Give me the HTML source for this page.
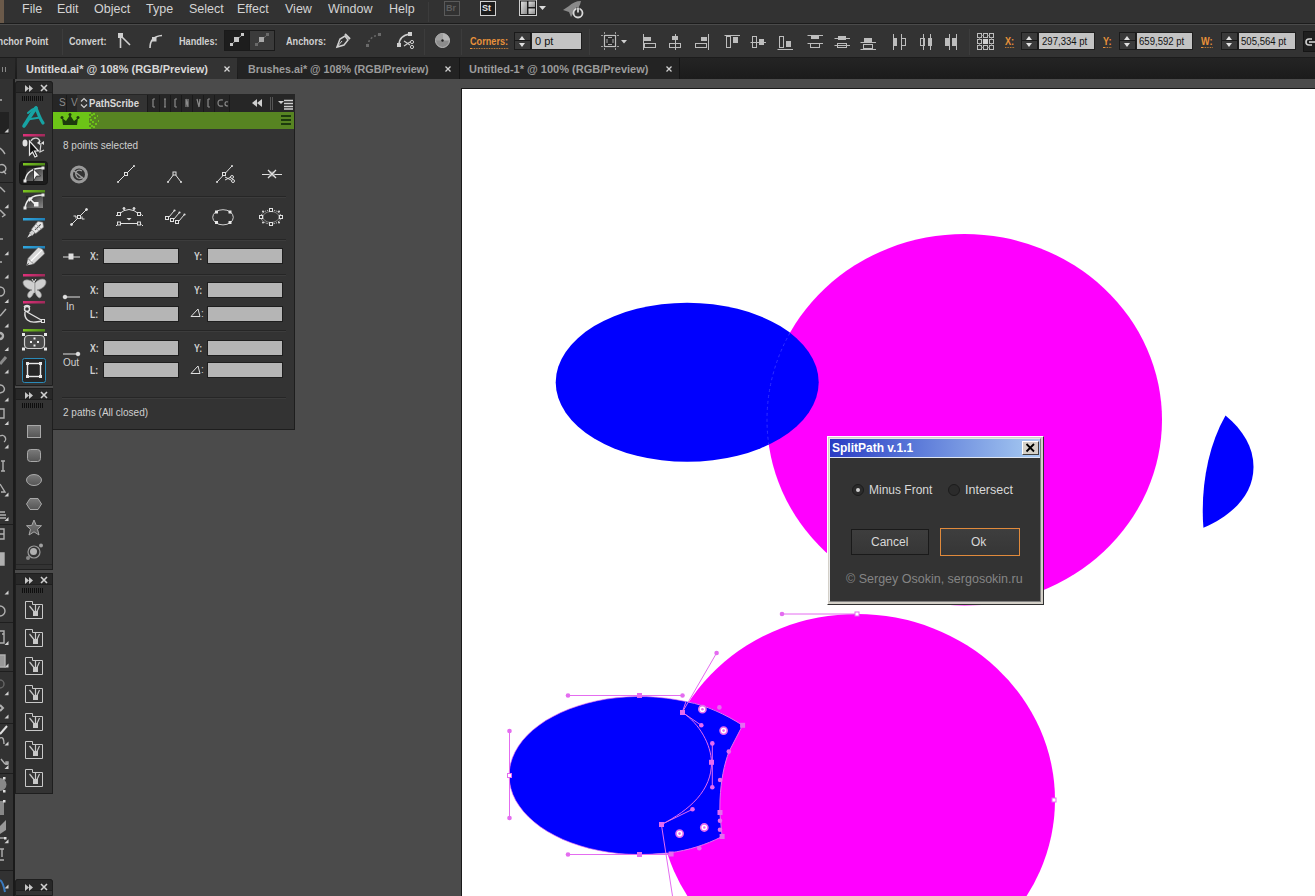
<!DOCTYPE html>
<html><head><meta charset="utf-8">
<style>
*{margin:0;padding:0;box-sizing:border-box}
html,body{width:1315px;height:896px;overflow:hidden;background:#4b4b4b;font-family:"Liberation Sans",sans-serif;position:relative}
.a{position:absolute}
.t{position:absolute;white-space:nowrap;line-height:1}
#menubar{left:0;top:0;width:1315px;height:24px;background:#323232;border-bottom:1px solid #1c1c1c}
#menubar .t{top:3px;font-size:12.5px;color:#d4d4d4}
#ctrl{left:0;top:25px;width:1315px;height:33px;background:#333333;border-bottom:1px solid #1c1c1c}
.lbl{font-size:11px;font-weight:bold;color:#d0d0d0;transform:scaleX(0.83);transform-origin:0 0}
.sep{position:absolute;width:1px;background:#262626;border-right:1px solid #3c3c3c}
#tabs{left:0;top:58px;width:1315px;height:21px;background:linear-gradient(#242424,#1b1b1b)}
.tab{position:absolute;top:0;height:21px}
.tab .t{font-size:11px;font-weight:bold;top:6px}
#artboard{left:461px;top:88px;width:854px;height:808px;background:#fff;border-left:1px solid #1a1a1a;border-top:1px solid #1a1a1a}
.inp{position:absolute;background:#c3c3c3;border:1px solid #1e1e1e}
.spin{position:absolute;background:#3a3a3a;border:1px solid #1a1a1a}
.spin:before{content:"";position:absolute;left:4px;top:3px;border-left:3.5px solid transparent;border-right:3.5px solid transparent;border-bottom:4px solid #e0e0e0}
.spin:after{content:"";position:absolute;left:4px;top:10px;border-left:3.5px solid transparent;border-right:3.5px solid transparent;border-top:4px solid #e0e0e0}
.spin i{position:absolute;left:0;right:0;top:7px;height:1px;background:#1a1a1a}
.orange{color:#e8913a;font-size:11px;font-weight:bold;transform:scaleX(0.83);transform-origin:0 0}
</style></head>
<body>
<!-- MENU BAR -->
<div id="menubar" class="a">
  <div class="a" style="left:0;top:0;width:4px;height:23px;background:#6b5a4a"></div>
  <div class="t" style="left:22px">File</div>
  <div class="t" style="left:57px">Edit</div>
  <div class="t" style="left:94px">Object</div>
  <div class="t" style="left:146px">Type</div>
  <div class="t" style="left:189px">Select</div>
  <div class="t" style="left:237px">Effect</div>
  <div class="t" style="left:285px">View</div>
  <div class="t" style="left:328px">Window</div>
  <div class="t" style="left:389px">Help</div>
  <div class="sep" style="left:428px;top:2px;height:20px"></div>
  <div class="a" style="left:444px;top:1px;width:16px;height:15px;border:1px solid #5a5a5a"></div>
  <div class="t" style="left:446px;top:4px;font-size:9px;font-weight:bold;color:#5e5e5e">Br</div>
  <div class="a" style="left:480px;top:1px;width:16px;height:15px;border:1px solid #d0d0d0;background:#1c1c1c"></div>
  <div class="t" style="left:482px;top:4px;font-size:9px;font-weight:bold;color:#e0e0e0">St</div>
  <svg class="a" style="left:519px;top:0px" width="28" height="17" viewBox="0 0 28 17"><defs><linearGradient id="wg" x1="0" y1="0" x2="1" y2="1"><stop offset="0" stop-color="#e0e0e0"/><stop offset="1" stop-color="#8a8a8a"/></linearGradient></defs><rect x="0.5" y="0" width="17" height="15.5" fill="#1c1c1c" stroke="#cfcfcf"/><rect x="2" y="1.5" width="6" height="12.5" fill="url(#wg)"/><rect x="9.5" y="1.5" width="6.5" height="5.5" fill="url(#wg)"/><rect x="9.5" y="8.5" width="6.5" height="5.5" fill="url(#wg)"/><path d="M20 6 L27 6 L23.5 10 Z" fill="#dcdcdc"/></svg>
  <svg class="a" style="left:561px;top:0px" width="24" height="20" viewBox="0 0 24 20"><path d="M2 10 L8 6 C11 3 15 1 20 1 C19 6 17 9 13 12 L10 17 L8 12 Z" fill="#8a8a8a"/><circle cx="17" cy="13" r="4.5" fill="#333" stroke="#d8d8d8" stroke-width="1.8"/><path d="M17 7 V13" stroke="#333" stroke-width="3"/><path d="M17 7.5 V12.5" stroke="#d8d8d8" stroke-width="1.8"/></svg>
</div>
<!-- CONTROL BAR -->
<div id="ctrl" class="a">
  <div class="t lbl" style="left:-9px;top:11px">Anchor Point</div>
  <div class="sep" style="left:62px;top:4px;height:26px"></div>
  <div class="t lbl" style="left:69px;top:11px">Convert:</div>
  <svg class="a" style="left:116px;top:6px" width="18" height="20" viewBox="0 0 18 20"><rect x="2" y="2" width="5" height="5" fill="#cfcfcf"/><path d="M4.5 7 V17 M5 5 L14 14" stroke="#cfcfcf" stroke-width="1.6" fill="none"/></svg>
  <svg class="a" style="left:146px;top:6px" width="20" height="20" viewBox="0 0 20 20"><path d="M4 17 C4 9 8 5 16 4.5" stroke="#cfcfcf" stroke-width="1.6" fill="none"/><rect x="6" y="6" width="4.5" height="4.5" fill="#cfcfcf"/></svg>
  <div class="t lbl" style="left:179px;top:11px">Handles:</div>
  <div class="a" style="left:224px;top:5px;width:26px;height:21px;background:#1d1d1d;border:1px solid #1a1a1a"></div>
  <div class="a" style="left:249px;top:5px;width:26px;height:21px;background:#3b3b3b;border:1px solid #1a1a1a"></div>
  <svg class="a" style="left:228px;top:7px" width="18" height="16" viewBox="0 0 18 16"><path d="M4 12 L14 3" stroke="#9a9a9a" stroke-width="1"/><rect x="6" y="5" width="5" height="5" fill="#c8c8c8"/><rect x="2" y="11" width="3" height="3" fill="#c8c8c8"/><rect x="13" y="1" width="3" height="3" fill="#c8c8c8"/></svg>
  <svg class="a" style="left:253px;top:7px" width="18" height="16" viewBox="0 0 18 16"><path d="M4 12 L14 3" stroke="#6a6a6a" stroke-width="1"/><rect x="6" y="5" width="5" height="5" fill="#a8a8a8"/><rect x="2" y="11" width="3" height="3" fill="#6a6a6a"/><rect x="13" y="1" width="3" height="3" fill="#6a6a6a"/></svg>
  <div class="t lbl" style="left:286px;top:11px">Anchors:</div>
  <svg class="a" style="left:333px;top:5px" width="20" height="20" viewBox="0 0 20 20"><path d="M4 17 L7 9 L12 6 L15 10 L11 15 Z" fill="none" stroke="#cfcfcf" stroke-width="1.5"/><path d="M12 4 L17 9" stroke="#cfcfcf" stroke-width="2"/><path d="M4 17 L9 11" stroke="#cfcfcf" stroke-width="1"/></svg>
  <svg class="a" style="left:365px;top:6px" width="18" height="18" viewBox="0 0 18 18"><path d="M3 15 C3 9 7 5 14 4" stroke="#6a6a6a" stroke-width="1.5" stroke-dasharray="2 2" fill="none"/><rect x="1" y="13" width="3" height="3" fill="#6a6a6a"/><rect x="13" y="2" width="3" height="3" fill="#6a6a6a"/></svg>
  <svg class="a" style="left:396px;top:5px" width="20" height="20" viewBox="0 0 20 20"><path d="M3 15 C3 9 7 5 14 4" stroke="#cfcfcf" stroke-width="1.5" fill="none"/><rect x="1" y="13" width="4" height="4" fill="#cfcfcf"/><rect x="12" y="2" width="4" height="4" fill="#cfcfcf"/><circle cx="16" cy="12" r="1.6" fill="none" stroke="#cfcfcf"/><circle cx="16" cy="17" r="1.6" fill="none" stroke="#cfcfcf"/><path d="M8 11 L14 15 M8 16 L14 12" stroke="#cfcfcf" stroke-width="1.2"/></svg>
  <div class="sep" style="left:424px;top:4px;height:26px"></div>
  <svg class="a" style="left:434px;top:7px" width="17" height="17" viewBox="0 0 17 17"><circle cx="8.5" cy="8.5" r="7" fill="#8c8c8c" stroke="#bdbdbd" stroke-width="1"/><path d="M8.5 8.5 L8.5 1.5 A7 7 0 0 1 15.5 8.5 Z" fill="#b5b5b5"/><path d="M8.5 8.5 L1.5 8.5 A7 7 0 0 1 8.5 1.5 Z" fill="#a0a0a0"/><circle cx="8.5" cy="8.5" r="1.2" fill="#222"/></svg>
  <div class="sep" style="left:461px;top:4px;height:26px"></div>
  <div class="t orange" style="left:470px;top:11px;border-bottom:1px dotted #e8913a;padding-bottom:1px">Corners:</div>
  <div class="spin" style="left:514px;top:7px;width:17px;height:18px"><i></i></div>
  <div class="inp" style="left:531px;top:7px;width:51px;height:18px"></div>
  <div class="t" style="left:535px;top:11px;font-size:11px;color:#111">0 pt</div>
  <div class="sep" style="left:589px;top:4px;height:26px"></div>
  <svg class="a" style="left:600px;top:7px" width="28" height="20" viewBox="0 0 28 20"><rect x="4.5" y="3.5" width="11" height="11" fill="#2a2a2a" stroke="#c0c0c0" stroke-width="1.2"/><path d="M1 3.5 H3 M17 3.5 H19 M1 14.5 H3 M17 14.5 H19 M4.5 0 V2 M15.5 0 V2 M4.5 16 V18 M15.5 16 V18" stroke="#9a9a9a"/><path d="M7 7 V11 M13 7 V11 M8 5.5 H12 M8 12.5 H12" stroke="#aaa"/><path d="M21 8 L27 8 L24 11.5 Z" fill="#d0d0d0"/></svg>
  <div class="sep" style="left:632px;top:4px;height:26px;display:none"></div>
  <svg class="a" style="left:641px;top:8px" width="16" height="18" viewBox="0 0 16 18"><path d="M2.5 1 V17" stroke="#bdbdbd"/><rect x="3" y="4" width="7" height="4" fill="#bdbdbd"/><rect x="3.5" y="10.5" width="11" height="4" fill="none" stroke="#bdbdbd"/></svg>
  <svg class="a" style="left:667px;top:8px" width="16" height="18" viewBox="0 0 16 18"><path d="M8.5 1 V17" stroke="#bdbdbd"/><rect x="5" y="3" width="6" height="4" fill="#bdbdbd"/><rect x="2.5" y="10.5" width="11" height="4" fill="none" stroke="#bdbdbd"/></svg>
  <svg class="a" style="left:694px;top:8px" width="16" height="18" viewBox="0 0 16 18"><path d="M14.5 1 V17" stroke="#bdbdbd"/><rect x="7" y="4" width="6" height="4" fill="#bdbdbd"/><rect x="1.5" y="10.5" width="11" height="4" fill="none" stroke="#bdbdbd"/></svg>
  <svg class="a" style="left:724px;top:8px" width="16" height="18" viewBox="0 0 16 18"><path d="M0.5 2.5 H16" stroke="#bdbdbd"/><rect x="2.5" y="3.5" width="4" height="11" fill="none" stroke="#bdbdbd"/><rect x="9" y="4" width="5" height="6" fill="#bdbdbd"/></svg>
  <svg class="a" style="left:750px;top:8px" width="16" height="18" viewBox="0 0 16 18"><path d="M0.5 9.5 H16" stroke="#bdbdbd"/><rect x="2.5" y="3.5" width="4" height="11" fill="none" stroke="#bdbdbd"/><rect x="9" y="6" width="5" height="6" fill="#bdbdbd"/></svg>
  <svg class="a" style="left:777px;top:8px" width="16" height="18" viewBox="0 0 16 18"><path d="M0.5 16.5 H16" stroke="#bdbdbd"/><rect x="2.5" y="3.5" width="4" height="11" fill="none" stroke="#bdbdbd"/><rect x="9" y="8" width="5" height="6" fill="#bdbdbd"/></svg>
  <svg class="a" style="left:807px;top:8px" width="16" height="18" viewBox="0 0 16 18"><path d="M0.5 2.5 H16 M0.5 10.5 H16" stroke="#bdbdbd"/><rect x="4" y="2" width="8" height="4" fill="#bdbdbd"/><rect x="3.5" y="10.5" width="9" height="4" fill="none" stroke="#bdbdbd"/></svg>
  <svg class="a" style="left:834px;top:8px" width="16" height="18" viewBox="0 0 16 18"><path d="M0.5 5.5 H16 M0.5 12.5 H16" stroke="#bdbdbd"/><rect x="4" y="3" width="8" height="4" fill="#bdbdbd"/><rect x="3.5" y="10.5" width="9" height="4" fill="none" stroke="#bdbdbd"/></svg>
  <svg class="a" style="left:860px;top:8px" width="16" height="18" viewBox="0 0 16 18"><path d="M0.5 9.5 H16 M0.5 16.5 H16" stroke="#bdbdbd"/><rect x="4" y="5" width="8" height="4" fill="#bdbdbd"/><rect x="3.5" y="11.5" width="9" height="4" fill="none" stroke="#bdbdbd"/></svg>
  <svg class="a" style="left:891px;top:8px" width="16" height="18" viewBox="0 0 16 18"><path d="M2.5 1 V17 M10.5 1 V17" stroke="#bdbdbd"/><rect x="2" y="5" width="4" height="8" fill="#bdbdbd"/><rect x="10.5" y="5.5" width="4" height="7" fill="none" stroke="#bdbdbd"/></svg>
  <svg class="a" style="left:918px;top:8px" width="16" height="18" viewBox="0 0 16 18"><path d="M5.5 1 V17 M12.5 1 V17" stroke="#bdbdbd"/><rect x="2.5" y="5.5" width="4" height="7" fill="none" stroke="#bdbdbd"/><rect x="10" y="5" width="4" height="8" fill="#bdbdbd"/></svg>
  <svg class="a" style="left:942px;top:8px" width="16" height="18" viewBox="0 0 16 18"><path d="M7.5 1 V17 M14.5 1 V17" stroke="#bdbdbd"/><rect x="3" y="5" width="4" height="8" fill="#bdbdbd"/><rect x="10" y="5" width="4" height="8" fill="#bdbdbd"/></svg>
  <div class="sep" style="left:969px;top:4px;height:26px"></div>
  <svg class="a" style="left:976px;top:6px" width="20" height="22" viewBox="0 0 20 22"><g fill="none" stroke="#bdbdbd"><rect x="1.5" y="2.5" width="4" height="4"/><rect x="7.5" y="2.5" width="4" height="4"/><rect x="13.5" y="2.5" width="4" height="4"/><rect x="1.5" y="8.5" width="4" height="4"/><rect x="13.5" y="8.5" width="4" height="4"/><rect x="1.5" y="14.5" width="4" height="4"/><rect x="7.5" y="14.5" width="4" height="4"/><rect x="13.5" y="14.5" width="4" height="4"/></g><rect x="7" y="8" width="5" height="5" fill="#d0d0d0"/><path d="M5.5 4.5 H7.5 M11.5 4.5 H13.5 M5.5 16.5 H7.5 M11.5 16.5 H13.5 M3.5 6.5 V8.5 M3.5 12.5 V14.5 M15.5 6.5 V8.5 M15.5 12.5 V14.5" stroke="#8a8a8a"/></svg>
  <div class="t orange" style="left:1005px;top:11px;border-bottom:1px dotted #e8913a">X:</div>
  <div class="spin" style="left:1021px;top:7px;width:17px;height:18px"><i></i></div>
  <div class="inp" style="left:1038px;top:7px;width:57px;height:18px"></div>
  <div class="t" style="left:1042px;top:11px;font-size:11px;color:#111;transform:scaleX(0.87);transform-origin:0 0">297,334 pt</div>
  <div class="t orange" style="left:1103px;top:11px;border-bottom:1px dotted #e8913a">Y:</div>
  <div class="spin" style="left:1119px;top:7px;width:17px;height:18px"><i></i></div>
  <div class="inp" style="left:1136px;top:7px;width:57px;height:18px"></div>
  <div class="t" style="left:1139px;top:11px;font-size:11px;color:#111;transform:scaleX(0.87);transform-origin:0 0">659,592 pt</div>
  <div class="t orange" style="left:1201px;top:11px;border-bottom:1px dotted #e8913a">W:</div>
  <div class="spin" style="left:1221px;top:7px;width:17px;height:18px"><i></i></div>
  <div class="inp" style="left:1238px;top:7px;width:58px;height:18px"></div>
  <div class="t" style="left:1241px;top:11px;font-size:11px;color:#111;transform:scaleX(0.87);transform-origin:0 0">505,564 pt</div>
  <div class="a" style="left:1303px;top:6px;width:14px;height:21px;background:#1f1f1f;border:1px solid #151515"></div>
  <svg class="a" style="left:1305px;top:11px" width="10" height="12" viewBox="0 0 10 12"><path d="M7 3 H4 A3 3 0 0 0 4 9 H7" stroke="#cfcfcf" stroke-width="1.6" fill="none"/><path d="M4 6 H10" stroke="#cfcfcf" stroke-width="1.6"/></svg>
</div>
<!-- TABS -->
<div id="tabs" class="a">
  <div class="a" style="left:0;top:0;width:15px;height:21px;background:#2b2b2b"></div><div class="a" style="left:2px;top:9px;width:1px;height:5px;background:#888"></div><div class="a" style="left:5px;top:9px;width:1px;height:5px;background:#888"></div>
  <div class="tab" style="left:17px;width:220px;background:#333333"><div class="t" style="left:9px;color:#d8d8d8">Untitled.ai* @ 108% (RGB/Preview)</div><svg class="a" style="left:206px;top:7px" width="8" height="8" viewBox="0 0 8 8"><path d="M1.5 1.5 L6.5 6.5 M6.5 1.5 L1.5 6.5" stroke="#d8d8d8" stroke-width="1.3"/></svg></div>
  <div class="tab" style="left:238px;width:222px;background:#232323;border-right:1px solid #151515"><div class="t" style="left:10px;color:#9c9c9c;transform:scaleX(0.976);transform-origin:0 0">Brushes.ai* @ 108% (RGB/Preview)</div><svg class="a" style="left:206px;top:7px" width="8" height="8" viewBox="0 0 8 8"><path d="M1.5 1.5 L6.5 6.5 M6.5 1.5 L1.5 6.5" stroke="#d0d0d0" stroke-width="1.3"/></svg></div>
  <div class="tab" style="left:460px;width:220px;background:#232323;border-right:1px solid #151515"><div class="t" style="left:9px;color:#9c9c9c">Untitled-1* @ 100% (RGB/Preview)</div><svg class="a" style="left:205px;top:7px" width="8" height="8" viewBox="0 0 8 8"><path d="M1.5 1.5 L6.5 6.5 M6.5 1.5 L1.5 6.5" stroke="#d0d0d0" stroke-width="1.3"/></svg></div>
</div>
<!-- LEFT STRIP -->
<div class="a" style="left:0;top:79px;width:15px;height:817px;background:#323232;border-right:2px solid #1a1a1a"></div>
<div class="a" style="left:0;top:112px;width:9px;height:22px;background:#222"></div>
<svg class="a" style="left:0;top:0" width="14" height="896" viewBox="0 0 14 896">
 <g fill="#d0d0d0"><path d="M4.5 132.5 L8.5 132.5 L8.5 128.5 Z"/><path d="M4.5 208.3 L8.5 208.3 L8.5 204.3 Z"/><path d="M4.5 255.2 L8.5 255.2 L8.5 251.2 Z"/><path d="M4.5 278.5 L8.5 278.5 L8.5 274.5 Z"/><path d="M4.5 303.1 L8.5 303.1 L8.5 299.1 Z"/><path d="M4.5 327.5 L8.5 327.5 L8.5 323.5 Z"/><path d="M4.5 351.1 L8.5 351.1 L8.5 347.1 Z"/><path d="M4.5 373.5 L8.5 373.5 L8.5 369.5 Z"/><path d="M4.5 401.5 L8.5 401.5 L8.5 397.5 Z"/><path d="M4.5 425.0 L8.5 425.0 L8.5 421.0 Z"/><path d="M4.5 448.5 L8.5 448.5 L8.5 444.5 Z"/><path d="M4.5 496.5 L8.5 496.5 L8.5 492.5 Z"/><path d="M4.5 521.0 L8.5 521.0 L8.5 517.0 Z"/><path d="M4.5 594.5 L8.5 594.5 L8.5 590.5 Z"/><path d="M4.5 645.1 L8.5 645.1 L8.5 641.1 Z"/><path d="M4.5 667.5 L8.5 667.5 L8.5 663.5 Z"/><path d="M4.5 695.3 L8.5 695.3 L8.5 691.3 Z"/><path d="M4.5 718.5 L8.5 718.5 L8.5 714.5 Z"/><path d="M4.5 745.5 L8.5 745.5 L8.5 741.5 Z"/><path d="M4.5 769.0 L8.5 769.0 L8.5 765.0 Z"/><path d="M4.5 843.2 L8.5 843.2 L8.5 839.2 Z"/><path d="M4.5 888.5 L8.5 888.5 L8.5 884.5 Z"/></g>
 <g stroke="#1e1e1e"><path d="M0 182.5 H13 M0 524.5 H13 M0 622.5 H13 M0 671.5 H13 M0 723.5 H13 M0 773.5 H13 M0 870.5 H13"/></g>
 <g stroke="#b0b0b0" fill="none" stroke-width="1.4">
  <path d="M0 100 H2"/>
  <path d="M0 148 L3 151 L5 154"/><path d="M0 165 A4 4 0 1 1 0 172 M3 171 L6 174"/>
  <path d="M0 187 L5 192"/><path d="M0 210 L5 215 L2 217"/>
  <path d="M0 239 H3"/><path d="M0 262 H2"/>
  <path d="M0 287 A4 4 0 0 1 0 296"/><path d="M0 316 L6 309"/><path d="M0 333 A3 3 0 0 1 0 339" stroke-width="2.4"/>
  <path d="M0 364 L6 357" stroke-width="3" stroke="#8a8a8a"/>
  <path d="M0 385 A4 4 0 0 1 3 392 L0 393"/><path d="M0 409 H4 V418 H0"/><path d="M0 436 A3 3 0 0 1 4 442"/>
  <path d="M3 461 V471 M1 461 H5 M1 471 H5"/><path d="M0 484 L5 492 L1 492"/><path d="M0 512 H5 M0 515 H6 M0 518 H6"/>
  <path d="M0 529 H4 V539 H0 M0 534 H4"/><path d="M0 553 H4 V565 H0" fill="#b0b0b0"/>
  <path d="M0 606 A4.5 4.5 0 0 1 0 616"/><path d="M0 631 H4 V643 H0 M2 634 H4"/><path d="M0 655 H5 V667 H0" fill="#999"/>
  <path d="M0 680 A4 4 0 0 1 0 688" stroke="#666"/><path d="M0 705 L3 708 L0 711" stroke-width="2"/>
  <path d="M0 734 L7 726" stroke="#e0e0e0" stroke-width="2"/><path d="M0 738 Q4 736 4 744"/><path d="M1 759 L5 764 M5 764 H8"/><rect x="6" y="762" width="2" height="2"/>
  <path d="M0 778 A6 6 0 0 1 0 791" fill="#888" stroke="none"/><path d="M0 801 H4 V815 H0" fill="#888" stroke="none"/>
  <path d="M0 826 L6 820 L6 830 L0 834 Z" fill="#999" stroke="none"/><path d="M0 838 H4"/>
  <path d="M0 849 H4 M2 849 V857 M0 860 H4"/><path d="M0 880 Q3 882 5 892" stroke="#3a7ac0" stroke-width="2"/>
 </g>
 <g fill="#e0e0e0"><rect x="3" y="777" width="2.5" height="2.5"/><rect x="3" y="790" width="2.5" height="2.5"/><rect x="3" y="800" width="2.5" height="2.5"/><rect x="4" y="837" width="2.5" height="2.5"/></g>
</svg>
<!-- COLUMN 2 -->
<div class="a" style="left:15px;top:81px;width:38px;height:305px;background:#333;border:1px solid #1e1e1e;border-radius:3px 3px 0 0"></div>
<div class="a" style="left:15px;top:81px;width:38px;height:12px;background:#282828;border:1px solid #1e1e1e;border-radius:3px 3px 0 0"></div>
<div class="a" style="left:15px;top:388px;width:38px;height:182px;background:#333;border:1px solid #1e1e1e"></div>
<div class="a" style="left:15px;top:388px;width:38px;height:12px;background:#282828;border:1px solid #1e1e1e"></div>
<div class="a" style="left:15px;top:573px;width:38px;height:221px;background:#333;border:1px solid #1e1e1e"></div>
<div class="a" style="left:15px;top:573px;width:38px;height:12px;background:#282828;border:1px solid #1e1e1e"></div>
<div class="a" style="left:15px;top:879px;width:38px;height:17px;background:#333;border:1px solid #1e1e1e;border-radius:3px 3px 0 0"></div>
<div class="a" style="left:15px;top:879px;width:38px;height:12px;background:#282828;border:1px solid #1e1e1e;border-radius:3px 3px 0 0"></div>
<svg class="a" style="left:15px;top:79px" width="38" height="817" viewBox="0 0 38 817">
 <defs>
  <g id="hdr"><path d="M10 4 L14 7.5 L10 11 Z M14 4 L18 7.5 L14 11 Z" fill="#c8c8c8"/><path d="M26 4 L32 10 M32 4 L26 10" stroke="#d0d0d0" stroke-width="1.6"/></g>
  <g id="grip"><path d="M8.5 0 V5 M10.5 0 V5 M12.5 0 V5 M14.5 0 V5 M16.5 0 V5 M18.5 0 V5 M20.5 0 V5 M22.5 0 V5 M24.5 0 V5 M26.5 0 V5 M28.5 0 V5" stroke="#0e0e0e" stroke-width="1"/></g>
  <g id="brush"><path d="M-8.5 8.5 V-8.5 H-1.5 V-5.5 H8.5 V8.5 Z" stroke="#c8c8c8" fill="none"/><rect x="-1" y="1" width="5" height="5" fill="#c8c8c8"/><path d="M-4.5 -4 L0 1.5 M1.5 -6 L1.5 1.5 M5.5 -4 L3 1.5" stroke="#c8c8c8" stroke-width="1.2"/></g>
 </defs>
 <use href="#hdr" y="2"/><use href="#hdr" y="309"/><use href="#hdr" y="494"/><use href="#hdr" y="801"/>
 <use href="#grip" x="-1" y="17"/><use href="#grip" x="-1" y="324"/><use href="#grip" x="-1" y="509"/>
 <!-- tool icons -->
 <defs>
  <linearGradient id="gr1" x1="0" y1="0" x2="1" y2="1"><stop offset="0" stop-color="#1e1e1e"/><stop offset="1" stop-color="#8a8a8a"/></linearGradient>
  <linearGradient id="pk" x1="0" x2="1"><stop offset="0" stop-color="#e0307a"/><stop offset="1" stop-color="#a02a5a"/></linearGradient>
  <linearGradient id="gn" x1="0" x2="1"><stop offset="0" stop-color="#7cc520"/><stop offset="1" stop-color="#4f8a1a"/></linearGradient>
  <linearGradient id="bl" x1="0" x2="1"><stop offset="0" stop-color="#30a8e0"/><stop offset="1" stop-color="#2080b8"/></linearGradient>
 </defs>
 <g fill="none" stroke="#17a3a3" stroke-linecap="round">
  <path d="M9 47 C12 43 16 35 21 29" stroke-width="3.6"/>
  <path d="M13 34 C16 31 19 29.5 21 29" stroke-width="2"/>
  <path d="M21 29 C23 34 25 40 28 44" stroke-width="3.2"/>
  <path d="M12.5 40.5 L25 38.5" stroke-width="2"/>
 </g>
 <rect x="8" y="55" width="22" height="2.5" fill="url(#pk)"/>
 <g><ellipse cx="10" cy="64" rx="2.5" ry="3.5" fill="#e0e0e0"/><path d="M16 62 C18 58 24 58 25 63" stroke="#d0d0d0" stroke-width="1.3" fill="none"/><path d="M26 64 L25 73 L29 71" stroke="#d0d0d0" stroke-width="1.2" fill="none"/><path d="M22 64 L25 61 L25 66 Z M29 62 L26 64 L29 66 Z" fill="#e0e0e0"/><path d="M14.5 62 L14.5 76 L17.5 73 L20 78 L22 77 L19.5 72 L23.5 72 Z" fill="#111" stroke="#e8e8e8" stroke-width="1.2"/></g>
 <rect x="4.5" y="82.5" width="28" height="23" rx="3" fill="#1c1c1c" stroke="#151515"/>
 <rect x="8" y="84" width="22" height="2.5" fill="url(#gn)"/>
 <g><rect x="11" y="89" width="17" height="13" fill="url(#gr1)"/><path d="M10 102 C11 94 17 89 28 89" stroke="#e8e8e8" stroke-width="1.3" fill="none"/><rect x="8.5" y="100.5" width="3" height="3" fill="#e8e8e8"/><rect x="26.5" y="87.5" width="3" height="3" fill="#e8e8e8"/><path d="M18.5 102 L18.5 90 L25.5 97 L21.5 97 Z" fill="#f4f4f4" stroke="#111" stroke-width="0.7"/></g>
 <rect x="8" y="111" width="22" height="2.5" fill="url(#gn)"/>
 <g><rect x="11" y="117" width="17" height="12" fill="url(#gr1)"/><path d="M10 129 C11 121 17 116 28 116" stroke="#e8e8e8" stroke-width="1.5" fill="none"/><rect x="8.5" y="127.5" width="3" height="3" fill="#e8e8e8"/><rect x="26.5" y="114.5" width="3" height="3" fill="#e8e8e8"/><path d="M14 119 L21 126" stroke="#f0f0f0" stroke-width="1.6"/><path d="M13.5 118.5 L18 119 L14 123 Z" fill="#f0f0f0"/><rect x="19" y="123" width="4.5" height="4.5" fill="#f0f0f0"/></g>
<rect x="8" y="139" width="22" height="2.5" fill="url(#bl)"/>
 <g transform="translate(20 151) rotate(-45)"><path d="M-11 0 L-6 -1.5 L-6 1.5 Z" fill="#e0e0e0"/><rect x="-6" y="-2" width="4" height="4" fill="#d0d0d0"/><path d="M-2 -3 L8 -4 L11 0 L8 4 L-2 3 Z" fill="#e8e8e8" stroke="#888" stroke-width="0.6"/><path d="M0 0 H8" stroke="#444" stroke-width="1"/><path d="M2 -3.5 V3.5 M5 -3.8 V3.8" stroke="#999" stroke-width="0.7"/></g>
 <rect x="8" y="167" width="22" height="2.5" fill="url(#bl)"/>
 <g transform="translate(20 178) rotate(-45)"><path d="M-12 0 L-6 -4 L-6 4 Z" fill="#e0e0e0"/><path d="M-6 -4 L9 -4.5 Q12 0 9 4.5 L-6 4 Z" fill="#d8d8d8" stroke="#777" stroke-width="0.6"/><path d="M-6 0 H10" stroke="#fff" stroke-width="1.2"/><path d="M-12 0 L-9 0" stroke="#555" stroke-width="1"/></g>
 <rect x="8" y="195" width="22" height="2.5" fill="url(#pk)"/>
 <g fill="#cfcfcf" stroke="#8a8a8a" stroke-width="0.7"><path d="M19 204 C15 200 9 200 8 203 C8 207 12 210 17 211 C13 212 11 217 14 219 C16 219 18 216 19 213 Z"/><path d="M20 204 C24 199 31 199 31 203 C31 207 27 210 22 211 C26 212 28 217 25 219 C23 219 21 216 20 213 Z"/></g>
 <path d="M19 203 V214 M17 200 L19 203 L21 200" stroke="#eee" stroke-width="1" fill="none"/>
 <rect x="8" y="222" width="22" height="2.5" fill="url(#pk)"/>
 <g stroke="#e0e0e0" fill="none" stroke-width="1.4"><circle cx="12" cy="230" r="2.5"/><path d="M10 233 C9 240 14 244 21 243 L28 242 L12 233 M9 228 C10 226 14 226 15 228"/></g>
 <rect x="26.5" y="240.5" width="3" height="3" fill="#333" stroke="#e0e0e0"/>
 <rect x="8" y="250" width="22" height="2.5" fill="url(#gn)"/>
 <g><rect x="9.5" y="256.5" width="20" height="13" rx="4" fill="#4a4a4a" stroke="#d0d0d0" stroke-width="1.2"/><g fill="#f0f0f0"><rect x="18.5" y="258.5" width="2" height="2"/><rect x="18.5" y="265.5" width="2" height="2"/><rect x="15" y="262" width="2" height="2"/><rect x="22" y="262" width="2" height="2"/></g><rect x="7" y="254" width="3" height="3" fill="#e8e8e8"/><rect x="29" y="254" width="3" height="3" fill="#e8e8e8"/><rect x="7" y="268.5" width="3" height="3" fill="#e8e8e8"/><rect x="29" y="268.5" width="3" height="3" fill="#e8e8e8"/></g>
 <rect x="7.5" y="279.5" width="23" height="24" rx="2" fill="#262626" stroke="#2a8ab8"/>
 <g><rect x="12.5" y="284.5" width="13" height="13" fill="none" stroke="#e8e8e8" stroke-width="1.4"/><rect x="11" y="283" width="3" height="3" fill="#e8e8e8"/><rect x="24" y="283" width="3" height="3" fill="#e8e8e8"/><rect x="11" y="296" width="3" height="3" fill="#e8e8e8"/><rect x="24" y="296" width="3" height="3" fill="#e8e8e8"/></g>
 <!-- shapes panel -->
 <defs><linearGradient id="sg" x1="0" y1="0" x2="0" y2="1"><stop offset="0" stop-color="#7a7a7a"/><stop offset="1" stop-color="#555"/></linearGradient></defs>
 <g fill="url(#sg)" stroke="#a8a8a8" stroke-width="1">
 <rect x="12.5" y="346.5" width="13" height="12"/>
 <rect x="12.5" y="370.5" width="13" height="12" rx="3"/>
 <ellipse cx="19" cy="401" rx="7.5" ry="5.5"/>
 <path d="M15 419.5 L23 419.5 L26.5 425 L23 430.5 L15 430.5 L11.5 425 Z"/>
 <path d="M19 441 L21.3 446.5 L26.5 446.7 L22.5 450.3 L24 456 L19 452.8 L14 456 L15.5 450.3 L11.5 446.7 L16.7 446.5 Z"/>
 </g>
 <g><circle cx="19" cy="473" r="6" fill="none" stroke="#9a9a9a" stroke-width="1.2"/><circle cx="18.5" cy="472.5" r="3.5" fill="#b0b0b0"/><circle cx="26" cy="466.5" r="2" fill="#a0a0a0"/><circle cx="13" cy="479" r="2" fill="#888"/></g>
 <rect x="1" y="485" width="36" height="1" fill="#262626"/>
 <!-- brushes panel -->
 <use href="#brush" x="19" y="531"/><use href="#brush" x="19" y="559"/><use href="#brush" x="19" y="587"/><use href="#brush" x="19" y="615"/><use href="#brush" x="19" y="643"/><use href="#brush" x="19" y="671"/><use href="#brush" x="19" y="699"/>
</svg>
<!-- ARTBOARD -->
<!-- PATHSCRIBE PANEL -->
<div class="a" style="left:53px;top:94px;width:242px;height:336px;background:#333333;border:1px solid #1e1e1e;border-left:none"></div>
<div class="a" style="left:53px;top:94px;width:242px;height:18px;background:#262626"></div>
<div class="a" style="left:77px;top:95px;width:70px;height:17px;background:#333333"></div>
<div class="t" style="left:59px;top:98px;font-size:10px;color:#8a8a8a">S</div>
<div class="a" style="left:66px;top:95px;width:1px;height:17px;background:#1a1a1a"></div>
<div class="t" style="left:71px;top:98px;font-size:10px;color:#8a8a8a">V</div>
<svg class="a" style="left:80px;top:97px" width="8" height="12" viewBox="0 0 8 12"><path d="M1 4.5 L4 1.5 L7 4.5 M1 7.5 L4 10.5 L7 7.5" stroke="#cfcfcf" fill="none" stroke-width="1.2"/></svg>
<div class="t" style="left:89px;top:98px;font-size:11px;font-weight:bold;color:#d8d8d8;transform:scaleX(0.87);transform-origin:0 0">PathScribe</div>
<svg class="a" style="left:147px;top:95px" width="148" height="17" viewBox="0 0 148 17">
 <g stroke="#1a1a1a"><path d="M0.5 0 V17 M12.5 0 V17 M23.5 0 V17 M34.5 0 V17 M45.5 0 V17 M56.5 0 V17 M67.5 0 V17 M82.5 0 V17"/></g>
 <g fill="none" stroke="#8a8a8a" stroke-width="1.2"><path d="M6 4 V12 M6 4 H8 M6 12 H8"/><path d="M18 4 V12 M17 4 H19 M17 12 H19"/><path d="M28 4 V12 M28 4 H30 M28 12 H30"/><path d="M39 4 V12 M39 4 L41 12 M41 4 V12"/><path d="M50 4 L52 12 M53 4 L52 12"/><path d="M61 4 V12 M61 4 H63 M61 12 H63"/><path d="M76 5 Q71 4 71 8 Q71 12 76 11 M81 7 Q78 6 78 9 Q78 11 81 11"/></g>
 <path d="M105 8 L110 4 L110 12 Z M110 8 L115 4 L115 12 Z" fill="#cfcfcf"/>
 <path d="M123.5 2 V15 M125.5 2 V15" stroke="#555"/>
 <path d="M131 6 L137 6 L134 9 Z" fill="#cfcfcf"/><path d="M137 5.5 H146 M137 8.5 H146 M137 11.5 H146 M137 14 H146" stroke="#cfcfcf" stroke-width="1.3"/>
</svg>
<div class="a" style="left:53px;top:112px;width:241px;height:17px;background:#578422"></div>
<svg class="a" style="left:53px;top:112px" width="241" height="17" viewBox="0 0 241 17">
 <rect x="0" y="0" width="36" height="17" fill="#6cc417"/>
 <g fill="#6cc417"><rect x="36" y="0" width="2" height="2"/><rect x="38" y="2" width="2" height="2"/><rect x="36" y="4" width="2" height="2"/><rect x="40" y="1" width="2" height="2"/><rect x="37" y="7" width="2" height="2"/><rect x="39" y="9" width="2" height="2"/><rect x="36" y="11" width="2" height="2"/><rect x="38" y="13" width="2" height="2"/><rect x="41" y="5" width="2" height="2"/><rect x="36" y="15" width="2" height="2"/><rect x="42" y="11" width="2" height="2"/><rect x="44" y="3" width="1" height="2"/><rect x="40" y="14" width="2" height="2"/><rect x="45" y="8" width="1" height="2"/></g>
 <path d="M9 6 L13 9 L17 3 L21 9 L25 6 L24 13 L10 13 Z" fill="#1d3a0e"/><circle cx="9" cy="5.5" r="1.5" fill="#1d3a0e"/><circle cx="17" cy="2.5" r="1.5" fill="#1d3a0e"/><circle cx="25" cy="5.5" r="1.5" fill="#1d3a0e"/>
 <path d="M228 4 H238 M228 8 H238 M228 12 H238" stroke="#1d3a0e" stroke-width="2"/>
</svg>
<div class="t" style="left:63px;top:141px;font-size:10px;color:#d0d0d0">8 points selected</div>
<svg class="a" style="left:53px;top:130px" width="241" height="300" viewBox="0 0 241 300">
 <g stroke="#262626"><path d="M9 66.5 H233 M9 109.5 H233 M9 144.5 H233 M9 200.5 H233 M9 267.5 H233"/></g>
 <g stroke="#3c3c3c"><path d="M9 67.5 H233 M9 110.5 H233 M9 145.5 H233 M9 201.5 H233 M9 268.5 H233"/></g>
 <!-- row 1 -->
 <circle cx="26" cy="44.5" r="7.5" fill="none" stroke="#9a9a9a" stroke-width="3"/>
 <path d="M29 41 Q25 39 23 42 Q22 46 25 48 Q28 49 30 47 M21 41 L31 49" stroke="#a0a0a0" fill="none" stroke-width="1.3"/>
 <g fill="none" stroke="#e0e0e0" stroke-width="1"><path d="M65 52 L81 36"/></g>
 <g fill="#333" stroke="#e0e0e0"><rect x="71.5" y="42.5" width="3" height="3"/></g>
 <g stroke="#e0e0e0" fill="none"><path d="M115 52 L121.5 43.5 L128 52"/><rect x="120" y="42" width="3" height="3" fill="#333"/></g>
 <g stroke="#e0e0e0" fill="none"><path d="M164 52 L179 36"/><rect x="169.5" y="42.5" width="3" height="3" fill="#333"/><circle cx="179" cy="47" r="1.5"/><circle cx="180" cy="51" r="1.5"/><path d="M172 47 L178 50 M172 50 L178 47"/></g>
 <g stroke="#e0e0e0" fill="none"><path d="M209 44.5 H229"/><rect x="216.5" y="41.5" width="5" height="5" fill="#777" stroke="none"/><path d="M215 40 L223 48 M223 40 L215 48" stroke-width="1.3"/></g>
 <g fill="#e0e0e0"><circle cx="65" cy="52" r="1"/><circle cx="81" cy="36" r="1"/><circle cx="115" cy="52" r="1"/><circle cx="128" cy="52" r="1"/><circle cx="164" cy="52" r="1"/><circle cx="179" cy="36" r="1"/></g>
 <!-- row 2 -->
 <g stroke="#e0e0e0" fill="none"><path d="M18.5 94.5 L24.5 88.5 M27.5 85.5 L33.5 79.5"/><rect x="24.5" y="85.5" width="3" height="3" fill="#333"/><path d="M23 86 L20.5 86 M23 86 L23 88.5" stroke-width="1.1"/><path d="M29 89 L31.5 89 M29 89 L29 86.5" stroke-width="1.1"/><circle cx="18.5" cy="94.5" r="1" fill="#e0e0e0"/><circle cx="33.5" cy="79.5" r="1" fill="#e0e0e0"/></g>
 <g stroke="#e0e0e0" fill="none"><path d="M66 84 Q76 75 86 84"/><rect x="64.5" y="82.5" width="3" height="3" fill="#333"/><rect x="84.5" y="82.5" width="3" height="3" fill="#333"/><path d="M66 93.5 H86"/><rect x="64.5" y="92" width="3" height="3" fill="#333"/><rect x="84.5" y="92" width="3" height="3" fill="#333"/><path d="M73.5 88 L78.5 88 L76 90.5 Z" fill="#e0e0e0" stroke="none"/><circle cx="71" cy="78.5" r="1" fill="#e0e0e0"/><circle cx="81" cy="78.5" r="1" fill="#e0e0e0"/><path d="M63 86 L64.5 84.5 M88.5 84.5 L90 86 M63 96 L64.5 94.5 M88.5 94.5 L90 96"/></g>
 <g stroke="#e0e0e0" fill="none"><path d="M116 87 L121 81 M121 89 L126 83 M126 91 L131 85"/><rect x="112.5" y="86.5" width="3" height="3" fill="#333"/><rect x="117.5" y="88.5" width="3" height="3" fill="#333"/><rect x="122.5" y="90.5" width="3" height="3" fill="#333"/><g fill="#e0e0e0" stroke="none"><circle cx="121.5" cy="80.5" r="1.1"/><circle cx="126.5" cy="82.5" r="1.1"/><circle cx="131.5" cy="84.5" r="1.1"/></g></g>
 <g stroke="#d0d0d0" fill="none"><ellipse cx="170" cy="87.3" rx="10.3" ry="7.6"/><g fill="#e8e8e8" stroke="none"><rect x="162" y="80.5" width="3" height="3"/><rect x="175.5" y="80.5" width="3" height="3"/><rect x="162" y="91" width="3" height="3"/><rect x="175.5" y="91" width="3" height="3"/></g></g>
 <g stroke="#e0e0e0" fill="none"><ellipse cx="218" cy="87" rx="10" ry="7" stroke-dasharray="1.2 1.2"/><ellipse cx="218" cy="87" rx="8" ry="5.5" stroke="#9a9a9a" stroke-width="0.8"/><rect x="216.5" y="78.5" width="3" height="3" fill="#333"/><rect x="216.5" y="92.5" width="3" height="3" fill="#333"/><rect x="206.5" y="85.5" width="3" height="3" fill="#333"/><rect x="226.5" y="85.5" width="3" height="3" fill="#333"/><g fill="#e0e0e0" stroke="none"><circle cx="210" cy="81.5" r="1"/><circle cx="226" cy="81.5" r="1"/><circle cx="210" cy="92.5" r="1"/><circle cx="226" cy="92.5" r="1"/></g></g>
 <!-- field icons -->
 <g stroke="#e0e0e0"><path d="M10 127 H27"/><rect x="16" y="124" width="4" height="5" fill="#e0e0e0"/></g>
 <g stroke="#e0e0e0"><path d="M12 167 H27"/><circle cx="12" cy="167" r="1.8" fill="#e0e0e0"/></g>
 <g stroke="#e0e0e0"><path d="M10 224 H25"/><circle cx="25" cy="224" r="1.8" fill="#e0e0e0"/></g>
 <g stroke="#e0e0e0" fill="none"><path d="M138 186.5 L147 186.5 L145 179 Z"/><path d="M138 243.5 L147 243.5 L145 236 Z"/></g>
</svg>
<div class="t" style="left:66px;top:302px;font-size:10px;color:#d0d0d0">In</div>
<div class="t" style="left:63px;top:358px;font-size:10px;color:#d0d0d0">Out</div>
<div class="t lbl" style="left:90px;top:251px;font-size:10.5px;color:#d0d0d0">X:</div>
<div class="inp" style="left:103px;top:248px;width:76px;height:16px;background:#b5b5b5"></div>
<div class="t lbl" style="left:194px;top:251px;font-size:10.5px;color:#d0d0d0">Y:</div>
<div class="inp" style="left:207px;top:248px;width:76px;height:16px;background:#b5b5b5"></div>
<div class="t lbl" style="left:90px;top:285px;font-size:10.5px;color:#d0d0d0">X:</div>
<div class="inp" style="left:103px;top:282px;width:76px;height:16px;background:#b5b5b5"></div>
<div class="t lbl" style="left:194px;top:285px;font-size:10.5px;color:#d0d0d0">Y:</div>
<div class="inp" style="left:207px;top:282px;width:76px;height:16px;background:#b5b5b5"></div>
<div class="t lbl" style="left:90px;top:309px;font-size:10.5px;color:#d0d0d0">L:</div>
<div class="inp" style="left:103px;top:306px;width:76px;height:16px;background:#b5b5b5"></div>
<div class="t" style="left:201px;top:309px;font-size:10px;color:#d0d0d0">:</div>
<div class="inp" style="left:207px;top:306px;width:76px;height:16px;background:#b5b5b5"></div>
<div class="t lbl" style="left:90px;top:343px;font-size:10.5px;color:#d0d0d0">X:</div>
<div class="inp" style="left:103px;top:340px;width:76px;height:16px;background:#b5b5b5"></div>
<div class="t lbl" style="left:194px;top:343px;font-size:10.5px;color:#d0d0d0">Y:</div>
<div class="inp" style="left:207px;top:340px;width:76px;height:16px;background:#b5b5b5"></div>
<div class="t lbl" style="left:90px;top:365px;font-size:10.5px;color:#d0d0d0">L:</div>
<div class="inp" style="left:103px;top:362px;width:76px;height:16px;background:#b5b5b5"></div>
<div class="t" style="left:201px;top:365px;font-size:10px;color:#d0d0d0">:</div>
<div class="inp" style="left:207px;top:362px;width:76px;height:16px;background:#b5b5b5"></div>
<div class="t" style="left:63px;top:408px;font-size:10px;color:#d0d0d0">2 paths (All closed)</div>

<div id="artboard" class="a"></div>
<svg class="a" style="left:0;top:0" width="1315" height="896" viewBox="0 0 1315 896">
 <!-- top scene -->
 <ellipse cx="964.5" cy="419.8" rx="197.5" ry="185.8" fill="#ff00ff"/>
 <ellipse cx="687.2" cy="382.3" rx="131.5" ry="79.5" fill="#0000ff"/>
 <clipPath id="ce"><ellipse cx="687.2" cy="382.3" rx="131.5" ry="79.5"/></clipPath>
 <ellipse cx="964.5" cy="419.8" rx="197.5" ry="185.8" fill="none" stroke="#3030ff" stroke-width="1" stroke-dasharray="3 3" clip-path="url(#ce)"/>
 <path d="M1225.5 415.5 C1243 430 1253.5 447 1253.5 467 C1253.5 493 1235 514 1203.4 527.8 C1200.5 490 1207 448 1225.5 415.5 Z" fill="#0000ff"/>
 <!-- bottom scene -->
 <ellipse cx="857" cy="800" rx="198" ry="186" fill="#ff00ff"/>
 <path d="M686 701.5 C705 704 725 714 742.6 725.3 L729 751.6 C724 765 721 780 720 800 L719.8 812 L722.1 836.6 C705 845 690 850 669 853 L658.8 853.6 L648.8 854.3 L638.6 854.5 L628.5 854.2 L618.5 853.5 L608.5 852.2 L598.8 850.5 L589.3 848.4 L580.1 845.8 L571.2 842.8 L562.8 839.4 L554.9 835.6 L547.4 831.4 L540.5 826.9 L534.2 822.1 L528.6 817.0 L523.6 811.7 L519.3 806.1 L515.7 800.4 L512.9 794.5 L510.9 788.5 L509.6 782.4 L509.1 776.2 L509.4 770.1 L510.5 764.0 L512.4 757.9 L515.0 752.0 L518.4 746.2 L522.5 740.6 L527.3 735.2 L532.8 730.1 L539.0 725.2 L545.7 720.6 L553.1 716.4 L560.9 712.5 L569.2 709.0 L578.0 705.9 L587.1 703.2 L596.5 700.9 L606.2 699.1 L616.1 697.8 L626.1 696.9 L636.2 696.5 L646.4 696.6 L656.5 697.2 L666.5 698.2 L676.3 699.7 L686 701.5 Z" fill="#0000ff"/>
 <path d="M669 853 L658.8 853.6 L648.8 854.3 L638.6 854.5 L628.5 854.2 L618.5 853.5 L608.5 852.2 L598.8 850.5 L589.3 848.4 L580.1 845.8 L571.2 842.8 L562.8 839.4 L554.9 835.6 L547.4 831.4 L540.5 826.9 L534.2 822.1 L528.6 817.0 L523.6 811.7 L519.3 806.1 L515.7 800.4 L512.9 794.5 L510.9 788.5 L509.6 782.4 L509.1 776.2 L509.4 770.1 L510.5 764.0 L512.4 757.9 L515.0 752.0 L518.4 746.2 L522.5 740.6 L527.3 735.2 L532.8 730.1 L539.0 725.2 L545.7 720.6 L553.1 716.4 L560.9 712.5 L569.2 709.0 L578.0 705.9 L587.1 703.2 L596.5 700.9 L606.2 699.1 L616.1 697.8 L626.1 696.9 L636.2 696.5 L646.4 696.6 L656.5 697.2 L666.5 698.2 L676.3 699.7 L686 701.5" fill="none" stroke="#e46cf0" stroke-width="0.8" opacity="0.8"/>
</svg>
<svg class="a" style="left:0;top:0" width="1315" height="896" viewBox="0 0 1315 896">
 <g stroke="#e46cf0" fill="none" stroke-width="1">
  <path d="M509.5 731 V818"/>
  <path d="M568 695.5 H682.5"/>
  <path d="M568 854.5 H671"/>
  <path d="M682.3 712.3 L716.6 653"/>
  <path d="M782 614 H857"/>
  <path d="M682.3 712.3 C700 724 711 745 711.5 762 C712 790 690 810 661.4 824.5"/>
  <path d="M701.3 725.3 L682.3 712.3"/>
  <path d="M712.3 743.4 V787.3"/>
  <path d="M692.5 809.3 L661.4 824.5"/>
  <path d="M661.4 824.5 L672.5 896"/>
  <path d="M686 701.5 L682.3 712.3"/>
  <path d="M688 702 C705 705 725 714 742.6 725.3 L729 751.6 C724 765 721 780 720 800 L719.8 812 L722.1 836.6 C705 845 690 850 669 853"/>
 </g>
 <g fill="#e46cf0">
  <circle cx="509.5" cy="731" r="2.3"/><circle cx="509.5" cy="818" r="2.3"/>
  <circle cx="568" cy="695.5" r="2.3"/><circle cx="682.5" cy="695.5" r="2.3"/>
  <circle cx="568" cy="854.5" r="2.3"/>
  <circle cx="716.6" cy="653" r="2.3"/><circle cx="782" cy="614" r="2.3"/>
  <circle cx="719.4" cy="707.4" r="2.3"/><circle cx="701.3" cy="725.3" r="2.3"/>
  <circle cx="712.3" cy="743.4" r="2.3"/><circle cx="712.3" cy="787.3" r="2.3"/>
  <circle cx="728.8" cy="751.6" r="2.3"/><circle cx="720.1" cy="780" r="2.3"/>
  <circle cx="692.5" cy="809.3" r="2.3"/><circle cx="699.3" cy="848.3" r="2.3"/>
  <circle cx="720" cy="820.7" r="2.3"/><circle cx="720" cy="829.8" r="2.3"/>
  <rect x="680" y="710" width="5" height="5"/><rect x="740.1" y="722.8" width="5" height="5"/>
  <rect x="709" y="759.8" width="5" height="5"/><rect x="659" y="822" width="5" height="5"/>
  <rect x="719.6" y="834" width="5" height="5"/><rect x="717.5" y="810" width="5" height="5"/>
  <rect x="637" y="693" width="5" height="5"/><rect x="637" y="852" width="5" height="5"/>
  <rect x="668.6" y="851.5" width="5" height="5"/>
 </g>
 <g fill="#fff" stroke="#e46cf0" stroke-width="1"><rect x="507.5" y="773.5" width="4" height="4"/><rect x="855" y="612" width="4" height="4"/><rect x="1052" y="798" width="4" height="4"/></g>
 <g fill="#fff" stroke="#e46cf0" stroke-width="1.6"><circle cx="702.4" cy="709.2" r="3.6"/><circle cx="723.6" cy="730.6" r="3.6"/><circle cx="679.6" cy="833.6" r="3.6"/><circle cx="704.3" cy="827.5" r="3.6"/></g>
 <g fill="#e46cf0"><circle cx="702.4" cy="709.2" r="1.3"/><circle cx="723.6" cy="730.6" r="1.3"/><circle cx="679.6" cy="833.6" r="1.3"/><circle cx="704.3" cy="827.5" r="1.3"/></g>
</svg>
<!-- DIALOG -->
<div class="a" style="left:827px;top:436px;width:217px;height:169px;background:#d4d0c8;border:1px solid;border-color:#ffffff #303030 #303030 #ffffff"></div>
<div class="a" style="left:829px;top:438px;width:212px;height:164px;background:#d4d0c8;border:1px solid;border-color:#e8e8e8 #808080 #808080 #e8e8e8"></div>
<div class="a" style="left:830px;top:439px;width:210px;height:18px;background:linear-gradient(to right,#2a3cc4,#5a78d8 40%,#a8ccf2)"></div>
<div class="t" style="left:832px;top:442px;font-size:12px;font-weight:bold;color:#fff">SplitPath v.1.1</div>
<div class="a" style="left:1022px;top:441px;width:17px;height:14px;background:#d4d0c8;border:1px solid;border-color:#fff #404040 #404040 #fff"></div>
<svg class="a" style="left:1022px;top:441px" width="17" height="14" viewBox="0 0 17 14"><path d="M4.5 3 L12 10.5 M12 3 L4.5 10.5" stroke="#000" stroke-width="1.8"/></svg>
<div class="a" style="left:830px;top:457px;width:210px;height:1px;background:#dfe6f2"></div>
<div class="a" style="left:830px;top:458px;width:210px;height:143px;background:#333333"></div>
<div class="a" style="left:852px;top:484px;width:12px;height:12px;border-radius:50%;background:#2b2b2b;border:1px solid #1c1c1c"></div>
<div class="a" style="left:856px;top:488px;width:4px;height:4px;border-radius:50%;background:#d0d0d0"></div>
<div class="t" style="left:869px;top:484px;font-size:12px;color:#d8d8d8">Minus Front</div>
<div class="a" style="left:948px;top:484px;width:12px;height:12px;border-radius:50%;background:#2b2b2b;border:1px solid #1c1c1c"></div>
<div class="t" style="left:965px;top:484px;font-size:12.5px;color:#d8d8d8">Intersect</div>
<div class="a" style="left:851px;top:529px;width:78px;height:26px;background:linear-gradient(#3e3e3e,#363636);border:1px solid #1a1a1a"></div>
<div class="t" style="left:871px;top:536px;font-size:12px;color:#d8d8d8">Cancel</div>
<div class="a" style="left:940px;top:528px;width:80px;height:28px;background:linear-gradient(#3e3e3e,#363636);border:1px solid #e08a3c"></div>
<div class="t" style="left:971px;top:536px;font-size:12px;color:#d8d8d8">Ok</div>
<div class="t" style="left:846px;top:573px;font-size:12.5px;color:#858585">&copy; Sergey Osokin, sergosokin.ru</div>
</body></html>
